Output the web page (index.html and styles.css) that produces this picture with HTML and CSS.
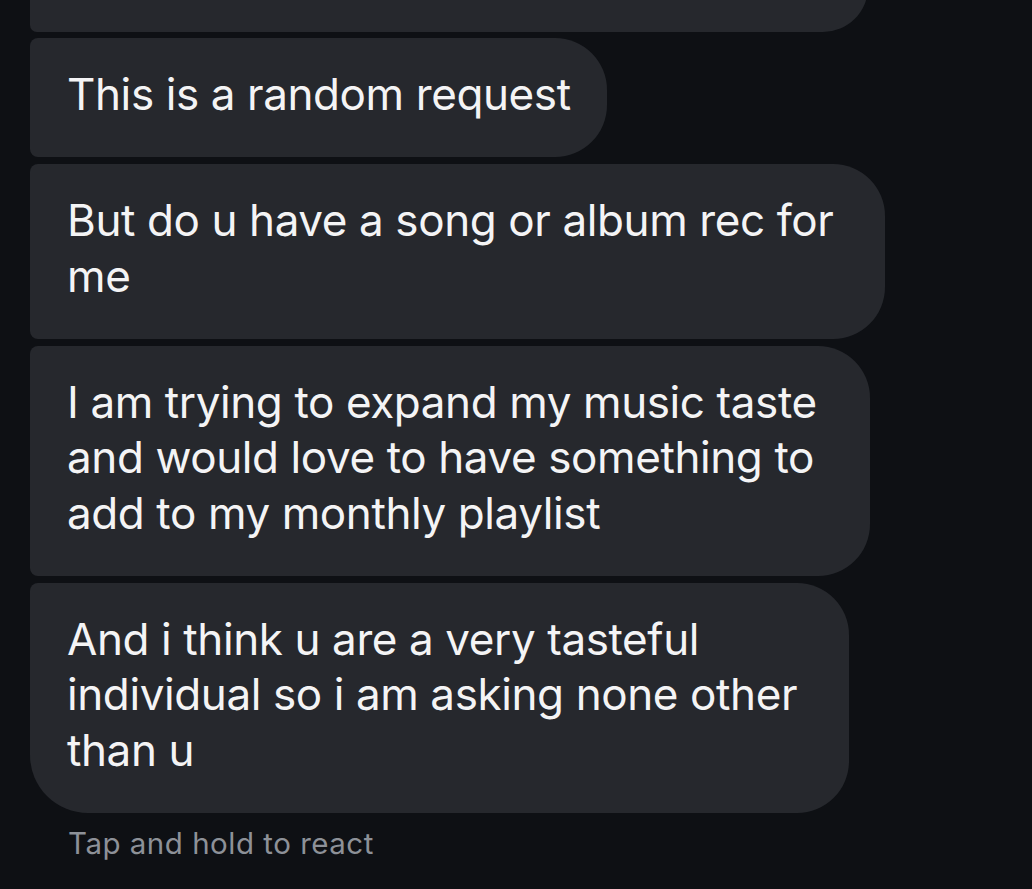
FILE: index.html
```html
<!DOCTYPE html>
<html lang="en">
<head>
<meta charset="utf-8">
<title>Messages</title>
<link rel="stylesheet" href="styles.css">
</head>
<body>
<main class="thread">
  <div class="bubble bubble-prev"></div>
  <div class="bubble w2">This is a random request</div>
  <div class="bubble w3">But do u have a song or album rec for<br>me</div>
  <div class="bubble w4">I am trying to expand my music taste<br>and would love to have something to<br>add to my monthly playlist</div>
  <div class="bubble w5 last">And i think u are a very tasteful<br>individual so i am asking none other<br>than u</div>
  <p class="hint">Tap and hold to react</p>
</main>
</body>
</html>
```

FILE: styles.css
```css
html, body {
  margin: 0;
  padding: 0;
  background: #0e1014;
  height: 100%;
  overflow: hidden;
}

.thread {
  display: flex;
  flex-direction: column;
  align-items: flex-start;
  gap: 7px;
  padding-left: 30px;
  font-family: "Inter", "Noto Sans", sans-serif;
}

.bubble {
  box-sizing: border-box;
  background: #26282d;
  color: #f4f4f5;
  font-size: 44px;
  line-height: 55.5px;
  padding: 29px 20px 34.5px 37px;
  white-space: nowrap;
  border-radius: 8px 52px 52px 8px;
  letter-spacing: -0.4px;
}

.bubble-prev {
  width: 838px;
  height: 90px;
  margin-top: -58px;
  margin-bottom: -1px;
}

.w2 { width: 577px; }
.w3 { width: 855px; }
.w4 { width: 840px; }
.w5 { width: 819px; }

.bubble.last {
  border-bottom-left-radius: 58px;
}

.hint {
  margin: 5px 0 0 38px;
  font-size: 29.5px;
  line-height: 36px;
  letter-spacing: 0.5px;
  color: #8d9198;
}
```
